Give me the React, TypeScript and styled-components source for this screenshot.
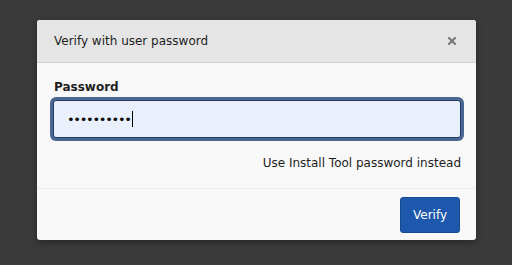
import React, { useState } from 'react';
import styled, { createGlobalStyle } from 'styled-components';

const GlobalStyle = createGlobalStyle`
  html, body {
    margin: 0;
    padding: 0;
    background: #3a3a3a;
    font-family: "DejaVu Sans", Verdana, sans-serif;
  }
`;

const Backdrop = styled.div`
  width: 512px;
  height: 265px;
  padding: 20px 36px 0 37px;
  box-sizing: border-box;
`;

const Modal = styled.div`
  width: 439px;
  background: #f8f8f8;
  border-radius: 3px;
  overflow: hidden;
  box-shadow: 0 2px 6px rgba(0, 0, 0, 0.35);
`;

const Header = styled.div`
  display: flex;
  align-items: center;
  justify-content: space-between;
  height: 42px;
  padding: 0 20px 0 17px;
  background: #e5e5e5;
  border-bottom: 1px solid #d0d0d0;
`;

const Title = styled.h4`
  margin: 0;
  font-size: 12px;
  font-weight: normal;
  color: #1e1e1e;
`;

const CloseButton = styled.button`
  width: 8px;
  height: 8px;
  padding: 0;
  border: none;
  background: none;
  display: flex;
  cursor: pointer;
`;

const Body = styled.div`
  display: flex;
  flex-direction: column;
  padding: 17px 15px 17px 16px;
  border-bottom: 1px solid #ebebeb;
`;

const Label = styled.label`
  font-size: 12px;
  line-height: 15px;
  font-weight: bold;
  color: #1e1e1e;
  margin: 0 0 5px 1px;
`;

const Field = styled.div`
  position: relative;
  display: flex;
`;

const PasswordInput = styled.input`
  box-sizing: border-box;
  height: 38px;
  width: 100%;
  margin: 0;
  padding: 0 13px;
  background: #e9f0fc;
  border: 1px solid #223b62;
  border-radius: 3px;
  box-shadow: 0 0 0 3px #4a6792;
  font-family: "DejaVu Sans", Verdana, sans-serif;
  font-size: 13px;
  letter-spacing: -1.3px;
  color: #111;
  caret-color: #000;
  outline: none;
`;

const Caret = styled.span`
  position: absolute;
  left: 79px;
  top: 11px;
  width: 1px;
  height: 16px;
  background: #000;
  pointer-events: none;
`;

const Help = styled.div`
  align-self: flex-end;
  margin-top: 18px;
  font-size: 12px;
  line-height: 15px;
  color: #1e1e1e;
`;

const Footer = styled.div`
  display: flex;
  justify-content: flex-end;
  padding: 8px 16px 7px;
`;

const VerifyButton = styled.button`
  width: 60px;
  height: 36px;
  background: #1e58ad;
  border: 1px solid #174a95;
  border-radius: 3px;
  color: #fff;
  font-family: inherit;
  font-size: 12px;
  cursor: pointer;
`;

export default function App() {
  const [password, setPassword] = useState('abcdefghij');

  return (
    <>
      <GlobalStyle />
      <Backdrop>
        <Modal>
          <Header>
            <Title>Verify with user password</Title>
            <CloseButton type="button" aria-label="Close">
              <svg width="8" height="8" viewBox="0 0 8 8">
                <path d="M1 1 L7 7 M7 1 L1 7" stroke="#777" strokeWidth="2" strokeLinecap="square" />
              </svg>
            </CloseButton>
          </Header>
          <Body>
            <Label htmlFor="pw">Password</Label>
            <Field>
              <PasswordInput
                id="pw"
                type="password"
                value={password}
                onChange={(e) => setPassword(e.target.value)}
              />
              <Caret />
            </Field>
            <Help>Use Install Tool password instead</Help>
          </Body>
          <Footer>
            <VerifyButton type="button">Verify</VerifyButton>
          </Footer>
        </Modal>
      </Backdrop>
    </>
  );
}
